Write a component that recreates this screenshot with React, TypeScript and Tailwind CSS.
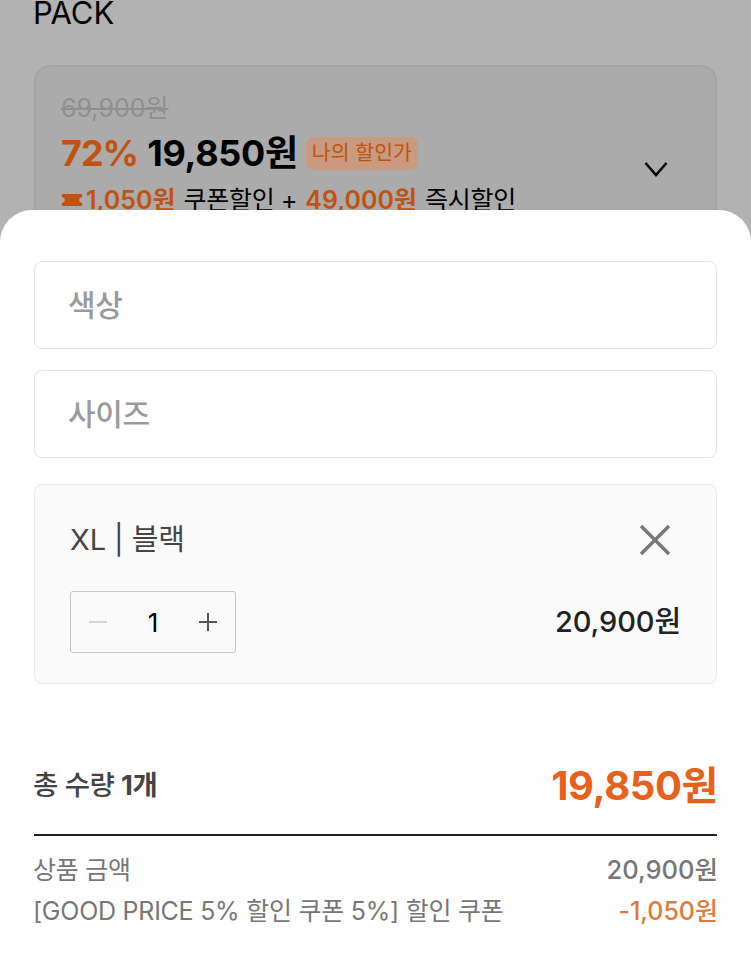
import React from "react";

const font = { fontFamily: '"Inter", "Noto Sans CJK KR", sans-serif' };

function Ticket() {
  return (
    <svg width="22" height="14" viewBox="0 0 22 14" className="mr-[3px] shrink-0">
      <path d="M1 1h20v3.2a2.8 2.8 0 0 0 0 5.6V13H1V9.8a2.8 2.8 0 0 0 0-5.6z" fill="#c2520f" />
    </svg>
  );
}

function Field({ label }: { label: string }) {
  return (
    <div className="flex h-[88px] items-center rounded-[8px] border border-[#e4e4e4] bg-white pl-[33px] pt-[1px] text-[30px] font-medium tracking-[-0.3px] text-[#9a9a9a]">
      {label}
    </div>
  );
}

export default function App() {
  return (
    <div className="relative h-[960px] w-[751px] overflow-hidden bg-[#b2b2b2]" style={font}>
      {/* dimmed page behind the sheet */}
      <div className="px-[34px]">
        <div className="-ml-[1px] text-[31px] leading-[26px] text-black">PACK</div>
        <div className="relative mt-[39px] h-[200px] rounded-[16px] border-2 border-[#a4a4a4] bg-[#ababab] pl-[25px] pt-[25px]">
          <div className="text-[25px] leading-[32px] text-[#8f8f8f] line-through">69,900원</div>
          <div className="mt-[1px] flex items-center">
            <span className="text-[36px] font-bold leading-[56px] tracking-[-1px] text-[#c2520f]">72%</span>
            <span className="ml-[9px] text-[36px] font-bold leading-[56px] tracking-[-0.3px] text-black">19,850원</span>
            <span className="ml-[8px] flex h-[33px] items-center rounded-[8px] bg-[#c89a80] px-[6px] text-[20.5px] text-[#c2520f]">나의 할인가</span>
          </div>
          <div className="mt-[1px] flex items-center text-[25px] leading-[36px] text-black">
            <Ticket />
            <span className="font-semibold text-[#c2520f]">1,050원</span>
            <span className="ml-[8px] tracking-[-0.3px]">쿠폰할인 +</span>
            <span className="ml-[8px] font-semibold text-[#c2520f]">49,000원</span>
            <span className="ml-[8px] tracking-[-0.3px]">즉시할인</span>
          </div>
          <svg width="26" height="18" viewBox="0 0 26 18" className="absolute right-[46px] top-[93px]" fill="none">
            <path d="M2.5 3 13 15 23.5 3" stroke="#000" strokeWidth="2.6" />
          </svg>
        </div>
      </div>

      {/* bottom sheet */}
      <div className="absolute inset-x-0 bottom-0 top-[210px] rounded-t-[32px] bg-white px-[34px] pt-[51px]">
        <div className="flex flex-col gap-[21px]">
          <Field label="색상" />
          <Field label="사이즈" />
        </div>

        <div className="mt-[26px] h-[200px] rounded-[8px] border border-[#e8e8e8] bg-[#fafafa] px-[35px] pt-[35px]">
          <div className="flex h-[40px] items-center justify-between">
            <span className="text-[29px] tracking-[-0.1px] text-[#444]">XL | 블랙</span>
            <svg width="34" height="34" viewBox="0 0 34 34" className="mr-[9px]" fill="none">
              <path d="M3 3 31 31M31 3 3 31" stroke="#777" strokeWidth="3.4" />
            </svg>
          </div>
          <div className="mt-[31px] flex items-center justify-between">
            <div className="flex h-[62px] w-[166px] items-center justify-between rounded-[3px] border border-[#c4c4c4] px-[17px]">
              <svg width="20" height="20" viewBox="0 0 20 20" fill="none">
                <path d="M1 10h18" stroke="#d4d4d4" strokeWidth="2" />
              </svg>
              <span className="text-[26px] text-black">1</span>
              <svg width="20" height="20" viewBox="0 0 20 20" fill="none">
                <path d="M1 10h18M10 1v18" stroke="#555" strokeWidth="2" />
              </svg>
            </div>
            <span className="text-[29px] font-medium tracking-[-0.1px] text-[#222]">20,900원</span>
          </div>
        </div>

        <div className="-mx-[1px] mt-[78px] flex h-[48px] items-center justify-between">
          <span className="text-[27.5px] font-medium tracking-[-0.5px] text-[#444]">
            총 수량 <b className="font-bold">1개</b>
          </span>
          <span className="text-[40px] font-bold tracking-[-0.4px] text-[#e9601a]">19,850원</span>
        </div>

        <div className="mt-[24px] border-t-2 border-[#222] pt-[14px]">
          <div className="-mx-[1px] flex h-[41px] items-center justify-between text-[25px] tracking-[-0.25px] text-[#777]">
            <span>상품 금액</span>
            <span className="text-[25.5px] font-medium tracking-normal">20,900원</span>
          </div>
          <div className="-mx-[1px] flex h-[41px] items-center justify-between text-[25px] tracking-[-0.25px] text-[#777]">
            <span>[GOOD PRICE 5% 할인 쿠폰 5%] 할인 쿠폰</span>
            <span className="font-medium tracking-normal text-[#e07b3a]">-1,050원</span>
          </div>
        </div>
      </div>
    </div>
  );
}
